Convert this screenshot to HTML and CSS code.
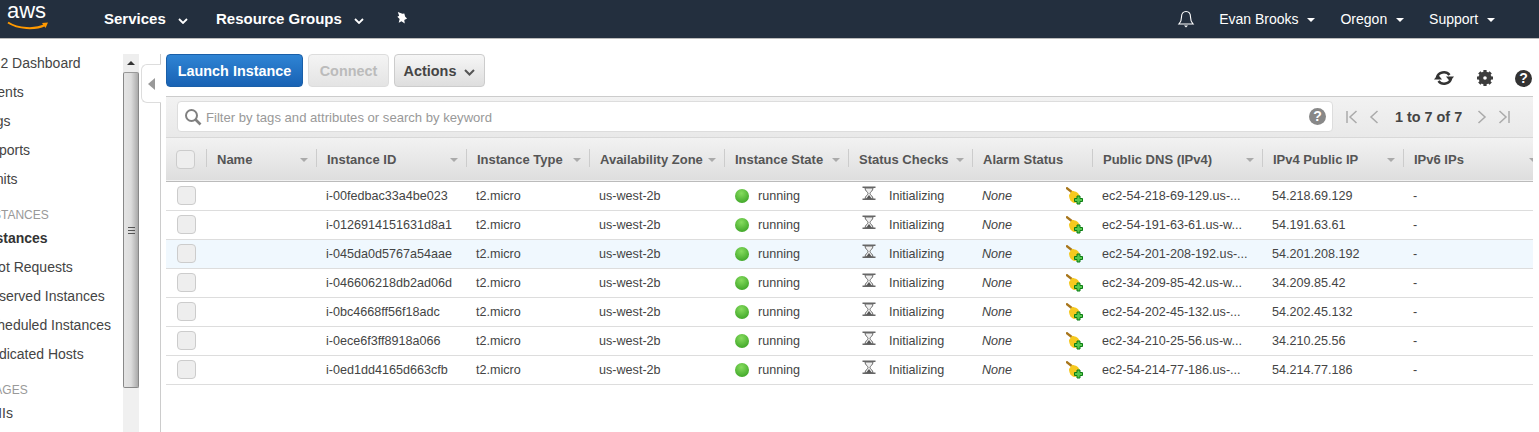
FILE: index.html
```html
<!DOCTYPE html>
<html lang="en">
<head>
    <meta charset="UTF-8" />
    <title>EC2 Management Console</title>
    <link rel="stylesheet" href="styles.css">
</head>
<body>
<header class="topbar">
    <div class="aws-logo">
        <span class="aws-word">aws</span>
        <svg class="aws-smile" width="42" height="10" viewBox="0 0 42 10"><path d="M1 1.500C11 8 28 9 38 4" fill="none" stroke="#f90" stroke-width="2"/><path d="M35 2l6-.5-2.500 5.500z" fill="#f90"/></svg>
    </div>
    <a class="nav-main services">Services <svg class="chev" width="10" height="6" viewBox="0 0 10 6"><path d="M1 1l4 4 4-4" fill="none" stroke="#fff" stroke-width="1.800"/></svg></a>
    <a class="nav-main groups">Resource Groups <svg class="chev" width="10" height="6" viewBox="0 0 10 6"><path d="M1 1l4 4 4-4" fill="none" stroke="#fff" stroke-width="1.800"/></svg></a>
    <svg class="pin" width="13" height="13" viewBox="0 0 14 14"><path d="M3 0l5 2 2-.5 1 3.500 2 2-3 1.500.5 4-3.500-2.500-3 1.500 1-4L2.500 5l2-1z" fill="#fff"/></svg>
    <div class="nav-right">
        <svg class="bell" width="18" height="18" viewBox="0 0 18 18"><path d="M2 14c2-2 2.500-3.500 2.500-7C4.500 3.500 6.500 1.500 9 1.500s4.500 2 4.500 5.500c0 3.500.5 5 2.500 7z" fill="none" stroke="#fff" stroke-width="1.100"/><path d="M7 15.500h4L9 17.500z" fill="#fff"/></svg>
        <a class="nav-user">Evan Brooks <i class="caret"></i></a>
        <a class="nav-region">Oregon <i class="caret"></i></a>
        <a class="nav-support">Support <i class="caret"></i></a>
    </div>
</header>

<div class="page">
    <nav class="sidebar">
        <ul>
            <li>EC2 Dashboard</li>
            <li>Events</li>
            <li>Tags</li>
            <li>Reports</li>
            <li>Limits</li>
            <li class="group">INSTANCES</li>
            <li class="active">Instances</li>
            <li>Spot Requests</li>
            <li>Reserved Instances</li>
            <li>Scheduled Instances</li>
            <li>Dedicated Hosts</li>
            <li class="group">IMAGES</li>
            <li>AMIs</li>
        </ul>
    </nav>
    <div class="scrollbar">
        <div class="scroll-up"></div>
        <div class="scroll-thumb"><span class="grip"></span></div>
    </div>
    <div class="gutter">
        <div class="collapse-tab"><i class="tab-arrow"></i></div>
    </div>

    <main class="content">
        <div class="toolbar">
            <button class="btn btn-primary">Launch Instance</button>
            <button class="btn btn-disabled">Connect</button>
            <button class="btn btn-actions">Actions <svg width="11" height="7" viewBox="0 0 11 7"><path d="M1 1l4.500 4.500L10 1" fill="none" stroke="#555" stroke-width="2"/></svg></button>
            <div class="tool-icons">
                <svg width="22" height="18" viewBox="0 0 22 18"><path d="M4 8.500A7 6.500 0 0 1 16.500 6" fill="none" stroke="#333" stroke-width="2.600"/><path d="M13 7.500h8l-4 5z" fill="#333"/><path d="M18 9.500A7 6.500 0 0 1 5.500 12" fill="none" stroke="#333" stroke-width="2.600"/><path d="M1 10.500h8l-4-5z" fill="#333"/></svg>
                <svg width="16" height="16" viewBox="0 0 16 16"><circle cx="8" cy="8" r="4.500" fill="none" stroke="#3c3c3c" stroke-width="4"/><path d="M8 0v16M0 8h16M2.300 2.300l11.400 11.400M13.700 2.300L2.300 13.700" stroke="#3c3c3c" stroke-width="3.200"/><circle cx="8" cy="8" r="1.800" fill="#fff"/></svg>
                <span class="help-dark">?</span>
            </div>
        </div>

        <div class="filter-panel">
            <div class="search-box">
                <svg width="18" height="18" viewBox="0 0 18 18"><circle cx="7.500" cy="7.500" r="5.500" fill="none" stroke="#808080" stroke-width="2"/><path d="M11.500 11.500l5 5" stroke="#808080" stroke-width="2.600"/></svg>
                <span class="search-text">Filter by tags and attributes or search by keyword</span>
                <span class="help-gray">?</span>
            </div>
            <div class="pager">
                <svg width="14" height="14" viewBox="0 0 14 14"><path d="M2 1v12M11.500 1L5 7l6.500 6" fill="none" stroke="#aaa" stroke-width="1.500"/></svg>
                <svg width="12" height="14" viewBox="0 0 12 14"><path d="M9.500 1L3 7l6.500 6" fill="none" stroke="#aaa" stroke-width="1.500"/></svg>
                <span class="pager-text">1 to 7 of 7</span>
                <svg width="12" height="14" viewBox="0 0 12 14"><path d="M2.500 1L9 7l-6.500 6" fill="none" stroke="#aaa" stroke-width="1.500"/></svg>
                <svg width="14" height="14" viewBox="0 0 14 14"><path d="M12 1v12M2.500 1L9 7l-6.500 6" fill="none" stroke="#aaa" stroke-width="1.500"/></svg>
            </div>
        </div>

        <div class="table-wrap">
            <table class="instances">
                <colgroup>
                    <col class="c-check"><col class="c-name"><col class="c-id"><col class="c-type"><col class="c-zone"><col class="c-state"><col class="c-status"><col class="c-alarm"><col class="c-dns"><col class="c-ip"><col class="c-ipv6">
                </colgroup>
                <thead>
                    <tr>
                        <th class="check-cell"><span class="checkbox head-box"></span></th>
                        <th>Name<i class="sort"></i></th>
                        <th>Instance ID<i class="sort"></i></th>
                        <th>Instance Type<i class="sort"></i></th>
                        <th>Availability Zone<i class="sort"></i></th>
                        <th>Instance State<i class="sort"></i></th>
                        <th>Status Checks<i class="sort"></i></th>
                        <th>Alarm Status</th>
                        <th>Public DNS (IPv4)<i class="sort"></i></th>
                        <th>IPv4 Public IP<i class="sort"></i></th>
                        <th>IPv6 IPs<i class="sort"></i></th>
                    </tr>
                </thead>
                <tbody id="rows"></tbody>
            </table>
        </div>
    </main>
</div>

<script>
    const instances = [
      ['i-00fedbac33a4be023', 'ec2-54-218-69-129.us-...', '54.218.69.129'],
      ['i-0126914151631d8a1', 'ec2-54-191-63-61.us-w...', '54.191.63.61'],
      ['i-045da0d5767a54aae', 'ec2-54-201-208-192.us-...', '54.201.208.192'],
      ['i-046606218db2ad06d', 'ec2-34-209-85-42.us-w...', '34.209.85.42'],
      ['i-0bc4668ff56f18adc', 'ec2-54-202-45-132.us-...', '54.202.45.132'],
      ['i-0ece6f3ff8918a066', 'ec2-34-210-25-56.us-w...', '34.210.25.56'],
      ['i-0ed1dd4165d663cfb', 'ec2-54-214-77-186.us-...', '54.214.77.186']
    ];

    const hourglass = '<svg class="hourglass" width="14" height="15" viewBox="0 0 14 15"><path d="M3 2c0 3 3 4 3 5.500S3 10 3 13h8c0-3-3-4-3-5.500S11 5 11 2z" fill="#eee" stroke="#666"/><path d="M4 13l3-4 3 4z" fill="#555"/><path d="M.5 .5h13V2H.5zM.5 12.500h13V14H.5z" fill="#666"/></svg>';
    const broom = '<svg class="broom" width="18" height="18" viewBox="0 0 18 18"><path d="M0 .5l7 5.500" stroke="#a8761c" stroke-width="2.400"/><path d="M6 4c4 0 7 2 8 6l-1 5-5 1C5 15 3 12 3 8z" fill="#f6c91f"/><path d="M11 9h3v2.500h2.500v3H14V17h-3v-2.500H8.500v-3H11z" fill="#57c84f" stroke="#0a7d12"/></svg>';

    document.getElementById('rows').innerHTML = instances.map((row, i) => `
      <tr class="${i === 2 ? 'selected' : ''}">
        <td class="check-cell"><span class="checkbox"></span></td>
        <td></td>
        <td>${row[0]}</td>
        <td>t2.micro</td>
        <td>us-west-2b</td>
        <td><span class="dot"></span>running</td>
        <td class="status">${hourglass}Initializing</td>
        <td class="alarm"><em>None</em>${broom}</td>
        <td>${row[1]}</td>
        <td>${row[2]}</td>
        <td>-</td>
      </tr>`).join('');
</script>
</body>
</html>
```
FILE: styles.css
```css
* {
  box-sizing: border-box;
}

html, body {
  height: 100%;
}

body {
  margin: 0;
  overflow: hidden;
  background-color: #fff;
  color: #444;
  font-family: 'Liberation Sans', Arial, sans-serif;
  font-size: 12px;
}

.topbar {
  display: flex;
  align-items: center;
  height: 39px;
  background-color: #232f3e;
  border-bottom: 1px solid #bbb;
  color: #fff;
}

.aws-logo {
  width: 104px;
  height: 38px;
  padding: 0 0 0 7px;
  flex: none;
}

.aws-word {
  display: block;
  font-size: 22px;
  line-height: 24px;
  margin-top: -1px;
}

.aws-smile {
  display: block;
  margin-top: -2px;
}

.nav-main {
  margin-top: -2px;
  font-size: 15px;
  font-weight: bold;
  color: #fff;
}

.chev {
  margin-left: 8px;
}

.services {
  width: 112px;
}

.groups {
  width: 178px;
}

.pin {
  flex: none;
  margin: -2px 0 0 1px;
}

.nav-right {
  display: flex;
  align-items: center;
  margin-left: auto;
  padding-right: 44px;
  font-size: 14px;
}

.bell {
  margin-right: 24px;
}

.nav-user, .nav-region {
  margin-right: 25px;
}

.caret {
  display: inline-block;
  width: 0;
  height: 0;
  margin-left: 5px;
  vertical-align: 2px;
  border: 4px solid transparent;
  border-top: 4px solid #fff;
  border-bottom: 0;
}

.page {
  display: flex;
  height: 393px;
}

.sidebar {
  width: 123px;
  flex: none;
  overflow: hidden;
}

.sidebar ul {
  list-style: none;
  margin: 10px 0 0 -19px;
  padding: 0;
  width: 160px;
  font-size: 14px;
  line-height: 29px;
}

.sidebar .group {
  margin-top: 7px;
  line-height: 28px;
  font-size: 12px;
  color: #999;
}

.sidebar .group + li {
  margin-top: -5px;
}

.sidebar .active {
  padding-left: 2px;
  font-weight: bold;
  color: #333;
}

.scrollbar {
  width: 16px;
  flex: none;
  margin-top: 15px;
  background-color: #f0f0f0;
}

.scroll-up {
  height: 18px;
  position: relative;
  background-color: #eee;
}

.scroll-up::after {
  content: "";
  position: absolute;
  left: 4px;
  top: 7px;
  border: 4px solid transparent;
  border-bottom: 4px solid #333;
  border-top: 0;
}

.scroll-thumb {
  display: flex;
  align-items: center;
  justify-content: center;
  height: 316px;
  border: 1px solid #888;
  border-top-color: #999;
  border-radius: 2px;
  background: linear-gradient(to right, #e4e4e4, #dcdcdc 50%, #aaa);
}

.grip {
  display: block;
  width: 7px;
  height: 7px;
  border-top: 1px solid #555;
  border-bottom: 1px solid #555;
  background: linear-gradient(#555, #555) center / 100% 1px no-repeat;
}

.gutter {
  width: 22px;
  flex: none;
  margin-top: 15px;
  padding: 10px 0 0 2px;
  border-right: 1px solid #ccc;
}

.collapse-tab {
  display: flex;
  align-items: center;
  justify-content: center;
  width: 20px;
  height: 39px;
  margin-right: -1px;
  background-color: #fff;
  border: 1px solid #ddd;
  border-right: 0;
  border-radius: 6px 0 0 6px;
}

.tab-arrow {
  border: 6px solid transparent;
  border-left: 0;
  border-right: 7px solid #999;
}

.content {
  flex: 1;
  min-width: 0;
  padding: 15px 0 0 5px;
}

.toolbar {
  display: flex;
  align-items: flex-start;
  height: 42px;
  padding-right: 7px;
}

.btn {
  height: 33px;
  margin-right: 5px;
  padding: 0;
  border-radius: 4px;
  font-family: inherit;
  font-size: 14.4px;
  font-weight: bold;
}

.btn-primary {
  width: 137px;
  color: #fff;
  border: 1px solid #1a5fa8;
  background: linear-gradient(#2f84d4, #1862b4);
}

.btn-disabled {
  width: 81px;
  color: #bbb;
  border: 1px solid #ddd;
  background: linear-gradient(#f4f4f4, #e4e4e4);
}

.btn-actions {
  width: 91px;
  color: #444;
  border: 1px solid #ccc;
  background: linear-gradient(#f6f6f6, #dedede);
}

.btn-actions svg {
  margin-left: 4px;
}

.tool-icons {
  display: flex;
  align-items: center;
  gap: 22px;
  margin: 15px 0 0 auto;
}

.help-dark, .help-gray {
  display: block;
  width: 17px;
  height: 17px;
  border-radius: 50%;
  color: #fff;
  font-size: 14px;
  font-weight: bold;
  line-height: 17px;
  text-align: center;
}

.help-dark {
  background-color: #333;
}

.help-gray {
  margin-left: auto;
  background-color: #888;
}

.filter-panel {
  display: flex;
  align-items: flex-start;
  height: 42px;
  margin-right: 6px;
  padding: 4px 0 0 11px;
  border-top: 1px solid #ccc;
  border-bottom: 1px solid #d8d8d8;
  background: linear-gradient(#f2f2f2, #e9e9e9);
}

.search-box {
  display: flex;
  align-items: center;
  width: 1156px;
  height: 31px;
  padding: 0 6px;
  background-color: #fff;
  border: 1px solid #ddd;
  border-radius: 4px;
}

.search-text {
  margin-left: 4px;
  padding-top: 2px;
  color: #999;
  font-size: 13.1px;
}

.pager {
  display: flex;
  align-items: center;
  height: 32px;
  margin-left: 12px;
  gap: 9px;
}

.pager-text {
  margin: 0 5px 0 6px;
  color: #444;
  font-size: 14.4px;
  font-weight: bold;
  white-space: nowrap;
}

.table-wrap {
  margin-right: 6px;
  overflow: hidden;
}

.instances {
  width: 1379px;
  table-layout: fixed;
  border-collapse: collapse;
}

.c-check { width: 40px; }
.c-name { width: 110px; }
.c-id { width: 150px; }
.c-type { width: 123px; }
.c-zone { width: 135px; }
.c-state { width: 124px; }
.c-status { width: 124px; }
.c-alarm { width: 120px; }
.c-dns { width: 170px; }
.c-ip { width: 141px; }

.instances thead tr {
  height: 43px;
  background: linear-gradient(#f2f2f2, #dedede);
  border-bottom: 1px solid #bbb;
}

.instances th {
  position: relative;
  padding: 1px 0 0 11px;
  text-align: left;
  color: #555;
  font-size: 13px;
  font-weight: bold;
  white-space: nowrap;
}

.instances th::before {
  content: "";
  position: absolute;
  left: 0;
  top: 11px;
  height: 18px;
  border-left: 1px solid #ccc;
}

.instances th:first-child::before {
  display: none;
}

.sort {
  position: absolute;
  right: 8px;
  top: 20px;
  border: 4px solid transparent;
  border-top: 4px solid #aaa;
  border-bottom: 0;
}

.instances td {
  height: 29px;
  padding: 0 0 0 10px;
  border-bottom: 1px solid #ddd;
  font-size: 12.6px;
  white-space: nowrap;
}

.instances tr.selected {
  background-color: #f0f8fe;
}

.instances .check-cell {
  padding: 0 0 0 11px;
}

.checkbox {
  display: block;
  width: 19px;
  height: 19px;
  border: 1px solid #ccc;
  border-radius: 4px;
  background-color: #eee;
}

.head-box {
  margin-left: -1px;
}

.dot {
  display: inline-block;
  width: 14px;
  height: 14px;
  margin: 0 9px 0 1px;
  vertical-align: -3px;
  border-radius: 50%;
  background: radial-gradient(circle at 45% 30%, #86dc5e, #2f9a1c);
}

.hourglass {
  margin: 0 13px 0 4px;
  vertical-align: -1px;
}

.instances .status {
  padding-bottom: 3px;
}

.alarm em {
  display: inline-block;
  width: 84px;
}

.broom {
  vertical-align: -5px;
}
```
